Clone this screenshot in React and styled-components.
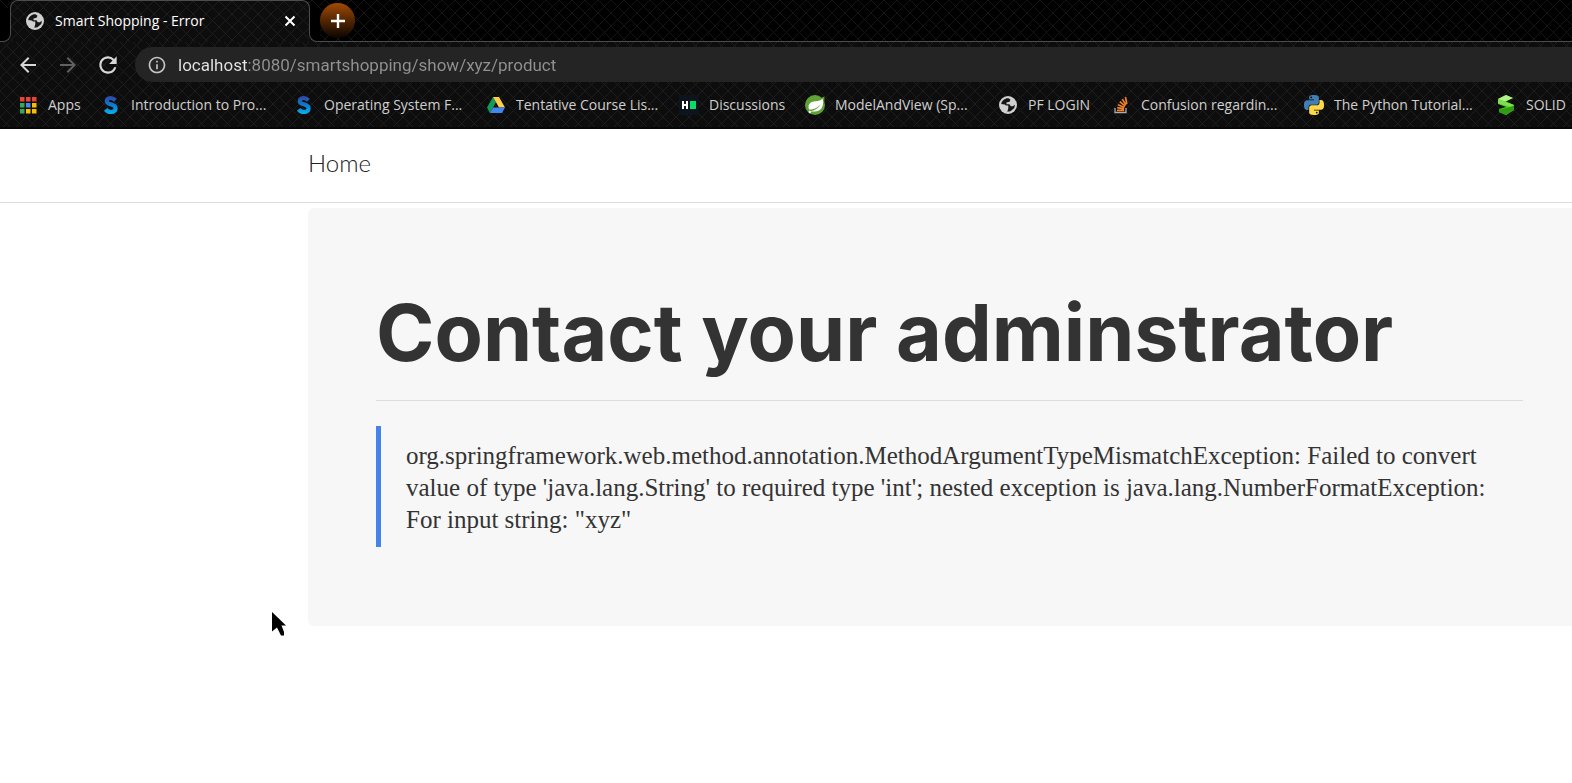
import React from 'react';
import styled, { createGlobalStyle, css } from 'styled-components';
import { MdInfoOutline, MdArrowBack, MdArrowForward, MdRefresh } from 'react-icons/md';

const GlobalStyle = createGlobalStyle`
  *, *::before, *::after { box-sizing: border-box; }
  html, body, #root { height: 100%; }
  body {
    margin: 0;
    overflow: hidden;
    background: #fff;
    font-family: "Open Sans", "Noto Sans", sans-serif;
  }
`;

const mesh = (line, base) => css`
  background-color: ${base};
  background-image:
    linear-gradient(45deg, transparent 47%, ${line} 47%, ${line} 53%, transparent 53%),
    linear-gradient(-45deg, transparent 47%, ${line} 47%, ${line} 53%, transparent 53%);
  background-size: 13px 13px;
`;

const Window = styled.div`
  position: relative;
  display: flex;
  flex-direction: column;
  min-height: 100%;
  overflow: hidden;
`;

const Chrome = styled.header`
  ${mesh('#1d1d1d', '#0d0d0d')}
  border-bottom: 2px solid #070707;
`;

const TabStrip = styled.div`
  ${mesh('#151515', '#000')}
  display: flex;
  align-items: flex-end;
  height: 42px;
`;

const Flare = styled.div`
  position: relative;
  z-index: 1;
  flex: none;
  width: 11px;
  height: 34px;
  background: #0d0d0d;

  &::before {
    content: "";
    display: block;
    height: 100%;
    background: #000;
    border: 0 solid #4c4c4c;
    border-bottom-width: 1px;
    ${p => p.$side === 'left'
      ? 'border-right-width: 1px; border-bottom-right-radius: 8px;'
      : 'border-left-width: 1px; border-bottom-left-radius: 8px;'}
  }
`;

const Tab = styled.div`
  ${mesh('#1d1d1d', '#0d0d0d')}
  display: flex;
  align-items: center;
  flex: none;
  gap: 10px;
  width: 300px;
  height: 42px;
  margin: 0 -1px;
  padding: 0 8px 2px 14px;
  border: 1px solid #4c4c4c;
  border-bottom: 0;
  border-radius: 8px 8px 0 0;
  color: #fff;
  font-size: 14px;
  line-height: 20px;
`;

const TabTitle = styled.span`
  flex: 1;
  white-space: nowrap;
`;

const IconButton = styled.button`
  display: flex;
  align-items: center;
  justify-content: center;
  flex: none;
  width: ${p => p.$size}px;
  height: ${p => p.$size}px;
  padding: 0;
  border: 0;
  border-radius: 50%;
  background: none;
  color: ${p => p.$color};
`;

const NewTabArea = styled.div`
  display: flex;
  flex: 1;
  align-items: center;
  height: 42px;
  border-bottom: 1px solid #4c4c4c;
`;

const NewTabButton = styled(IconButton)`
  background: linear-gradient(#a34a03, #5a2902 45%, #0c0500);
`;

const Toolbar = styled.div`
  display: flex;
  align-items: center;
  height: 45px;
  padding-left: 8px;
`;

const AddressBar = styled.label`
  display: flex;
  align-items: center;
  flex: 1;
  gap: 11px;
  height: 35px;
  margin-left: 7px;
  padding-left: 12px;
  border-radius: 18px 0 0 18px;
  background: #242424;
  color: #c4c4c4;
`;

const AddressInput = styled.input`
  flex: 1;
  min-width: 0;
  height: 26px;
  padding: 0;
  border: 0;
  outline: 0;
  background: linear-gradient(to right, #e6e6e6 69px, #929292 69px);
  background-clip: text;
  -webkit-background-clip: text;
  color: transparent;
  font: 17px/26px Roboto, sans-serif;
`;

const Bookmarks = styled.nav`
  display: flex;
  height: 40px;
  padding: 0 0 4px 18px;
`;

const Bookmark = styled.a`
  display: flex;
  align-items: center;
  flex: none;
  gap: 10px;
  width: ${p => p.$width}px;
  color: #cfcfcf;
  font-size: 14px;
  line-height: 20px;
  text-decoration: none;
  white-space: nowrap;
`;

const IconSlot = styled.span`
  display: flex;
  align-items: center;
  justify-content: center;
  flex: none;
  width: 20px;
  height: 20px;
`;

const SiteNav = styled.nav`
  padding: 20px 0 25px 308px;
  border-bottom: 1px solid #ddd;
  font: 300 24px/28px Lato, sans-serif;
`;

const SiteLink = styled.a`
  color: #222;
  text-decoration: none;
`;

const Card = styled.main`
  margin: 5px -19px 0 308px;
  padding: 68px;
  border-radius: 6px;
  background: #f7f7f7;
  color: #333;
`;

const Heading = styled.h1`
  margin: 0 0 25px;
  padding-bottom: 12px;
  border-bottom: 1px solid #ddd;
  font: 700 79px/112px Inter, sans-serif;
`;

const ErrorQuote = styled.blockquote`
  margin: 0 0 11px;
  padding: 14px 25px 11px;
  border-left: 5px solid #4582ec;
  font: 25px/32px "Liberation Serif", serif;
`;

const Pointer = styled.svg`
  position: absolute;
  top: 612px;
  left: 271px;
`;

const GlobeIcon = () => (
  <svg width="20" height="20" viewBox="0 0 20 20" aria-hidden="true">
    <circle cx="10" cy="10" r="9" fill="#d0d0d0" />
    <path
      d="M10.500 3.200C6.800 3 3.800 5.500 3.200 9L6.800 10.500H10.300V13.200L9.300 16.800L12.500 16.300L16.300 13L16.900 9.800L14.800 11.200H12.800L11.500 9.300H8.500V7.500L11.500 6.800L12.500 4.800Z"
      fill="#151515"
    />
    <path d="M3 9.300L7 9.600L8.500 12V13.500L6.500 13L3.200 10.500Z" fill="#d0d0d0" />
  </svg>
);

const CloseIcon = () => (
  <svg width="12" height="12" viewBox="0 0 12 12" aria-hidden="true">
    <path d="M1.500 1.500L10.500 10.500M10.500 1.500L1.500 10.500" stroke="currentColor" strokeWidth="2" />
  </svg>
);

const PlusIcon = () => (
  <svg width="16" height="16" viewBox="0 0 16 16" aria-hidden="true">
    <path d="M8 1V15M1 8H15" stroke="currentColor" strokeWidth="2.400" />
  </svg>
);

const AppsIcon = () => {
  const colors = ['#ea4335', '#ea4335', '#ea4335', '#34a853', '#4285f4', '#fbbc04', '#34a853', '#fbbc04', '#fbbc04'];
  return (
    <svg width="18" height="18" viewBox="0 0 18 18" aria-hidden="true">
      {colors.map((c, i) => (
        <rect key={i} x={1 + (i % 3) * 6} y={1 + Math.floor(i / 3) * 6} width="4.500" height="4.500" fill={c} />
      ))}
    </svg>
  );
};

const SwirlIcon = ({ id }) => (
  <svg width="20" height="20" viewBox="0 0 20 20" aria-hidden="true">
    <defs>
      <linearGradient id={id} gradientUnits="userSpaceOnUse" x1="10" y1="1" x2="10" y2="19">
        <stop offset="0" stopColor="#35439f" />
        <stop offset=".5" stopColor="#0b7bd0" />
        <stop offset="1" stopColor="#06b4f0" />
      </linearGradient>
    </defs>
    <path
      d="M14.4 5.2C12.6 3.4 10.9 2.9 9.3 3C7 3.2 5.7 4.6 5.8 6.3C6 9.9 14.4 8.7 14.6 13C14.7 15.4 12.8 17 10 17C7.800 17 6 16.200 4.600 14.400"
      fill="none"
      stroke={`url(#${id})`}
      strokeWidth="4.2"
    />
  </svg>
);

const DriveIcon = () => (
  <svg width="20" height="18" viewBox="0 0 20 18" aria-hidden="true">
    <path d="M7 1L10 6.300L4 17L1 11.600Z" fill="#0f9d58" />
    <path d="M7 1H13L19 11.600H13Z" fill="#ffcf48" />
    <path d="M7 11.600H19L16 17H4Z" fill="#4285f4" />
  </svg>
);

const HackerIcon = () => (
  <svg width="20" height="20" viewBox="0 0 20 20" aria-hidden="true">
    <rect width="20" height="20" fill="#0e141e" />
    <path d="M3 6H5V9H7V6H9V14H7V11H5V14H3Z" fill="#fff" />
    <rect x="11" y="6" width="6" height="8" fill="#05e06a" />
  </svg>
);

const SpringIcon = () => (
  <svg width="20" height="20" viewBox="0 0 20 20" aria-hidden="true">
    <circle cx="10" cy="10" r="10" fill="#5fa134" />
    <path d="M16.800 2.500L19.400 1.500L19.400 7Z" fill="#5fa134" />
    <path d="M17.600 3.400C19.200 8.600 17.500 15.300 11.600 16.200C8.900 16.700 6.500 16.500 4.800 16.200C10 15.700 13.800 12.600 15.600 9.200C12.700 12.700 9 14.300 4.500 14.800C2.700 12.300 3.500 8.700 6.700 7.100C10.500 5.300 14.800 6.900 17.600 3.400Z" fill="#fff" />
    <circle cx="4.800" cy="17" r="1.200" fill="#fff" />
  </svg>
);

const StackIcon = () => (
  <svg width="16" height="18" viewBox="0 0 16 18" aria-hidden="true">
    <path d="M2 12V16.500H13V12" fill="none" stroke="#a9adb0" strokeWidth="1.300" />
    <path
      d="M4 14.300H11M4.200 11.700L11.100 12.900M5 8.800L11.500 11.500M6.800 5.700L12.200 10.100M9.300 3.100L13 9M12.500 1.200L13.800 8"
      stroke="#f48024"
      strokeWidth="1.700"
      fill="none"
    />
  </svg>
);

const SNAKE =
  'M14.25.18l.9.2.73.26.59.3.45.32.34.34.25.34.16.33.1.3.04.26.02.2-.01.13V8.5l-.05.63-.13.55-.21.46-.26.38-.3.31-.33.25-.35.19-.35.14-.33.1-.3.07-.26.04-.21.02H8.77l-.69.05-.59.14-.5.22-.41.27-.33.32-.27.35-.2.36-.15.37-.1.35-.07.32-.04.27-.02.21v3.06H3.17l-.21-.03-.28-.07-.32-.12-.35-.18-.36-.26-.36-.36-.35-.46-.32-.59-.28-.73-.21-.88-.14-1.05-.05-1.23.06-1.22.16-1.04.24-.87.32-.71.36-.57.4-.44.42-.33.42-.24.4-.16.36-.1.32-.05.24-.01h.16l.06.01h8.16v-.83H6.18l-.01-2.75-.02-.37.05-.34.11-.31.17-.28.25-.26.31-.23.38-.2.44-.18.51-.15.58-.12.64-.1.71-.06.77-.04.84-.02 1.27.05zm-6.3 1.98l-.23.33-.08.41.08.41.23.34.33.22.41.09.41-.09.33-.22.23-.34.08-.41-.08-.41-.23-.33-.33-.22-.41-.09-.41.09z';

const PythonIcon = () => (
  <svg width="20" height="20" viewBox="0 0 24 24" aria-hidden="true">
    <path d={SNAKE} fill="#3f7fb5" />
    <path d={SNAKE} fill="#ffd845" transform="rotate(180 12 12)" />
  </svg>
);

const RibbonIcon = () => (
  <svg width="20" height="20" viewBox="0 0 20 20" aria-hidden="true">
    <path d="M2 4L10 0L17 3L10 6.500L18 10V15L10 20L3 17V14L10 12L2 9Z" fill="#4bc41e" />
    <path d="M2 4L10 0L17 3L9 6.500Z" fill="#b4f08c" />
    <path d="M2 4L18 10V13L2 8.500Z" fill="#7fe04e" />
    <path d="M3 14.500L11 13L18 10.500V15L10 20L3 17Z" fill="#2f9d10" />
  </svg>
);

const BOOKMARKS = [
  { label: 'Apps', width: 83, icon: <AppsIcon /> },
  { label: 'Introduction to Pro...', width: 193, icon: <SwirlIcon id="swirl-intro" /> },
  { label: 'Operating System F...', width: 192, icon: <SwirlIcon id="swirl-os" /> },
  { label: 'Tentative Course Lis...', width: 193, icon: <DriveIcon /> },
  { label: 'Discussions', width: 126, icon: <HackerIcon /> },
  { label: 'ModelAndView (Sp...', width: 193, icon: <SpringIcon /> },
  { label: 'PF LOGIN', width: 113, icon: <GlobeIcon /> },
  { label: 'Confusion regardin...', width: 193, icon: <StackIcon /> },
  { label: 'The Python Tutorial...', width: 192, icon: <PythonIcon /> },
  { label: 'SOLID', width: 193, icon: <RibbonIcon /> },
];

export default function App() {
  return (
    <Window>
      <GlobalStyle />
      <Chrome>
        <TabStrip>
          <Flare $side="left" />
          <Tab>
            <IconSlot><GlobeIcon /></IconSlot>
            <TabTitle>Smart Shopping - Error</TabTitle>
            <IconButton $size={22} $color="#fff" aria-label="Close tab"><CloseIcon /></IconButton>
          </Tab>
          <Flare $side="right" />
          <NewTabArea>
            <NewTabButton $size={35} $color="#fff" aria-label="New tab"><PlusIcon /></NewTabButton>
          </NewTabArea>
        </TabStrip>
        <Toolbar>
          <IconButton $size={40} $color="#d8d8d8" aria-label="Back"><MdArrowBack size={24} /></IconButton>
          <IconButton $size={40} $color="#616161" aria-label="Forward"><MdArrowForward size={24} /></IconButton>
          <IconButton $size={40} $color="#d8d8d8" aria-label="Reload"><MdRefresh size={26} /></IconButton>
          <AddressBar>
            <MdInfoOutline size={20} />
            <AddressInput aria-label="Address" defaultValue="localhost:8080/smartshopping/show/xyz/product" spellCheck="false" />
          </AddressBar>
        </Toolbar>
        <Bookmarks>
          {BOOKMARKS.map(b => (
            <Bookmark key={b.label} href="#" $width={b.width}>
              <IconSlot>{b.icon}</IconSlot>
              {b.label}
            </Bookmark>
          ))}
        </Bookmarks>
      </Chrome>
      <SiteNav>
        <SiteLink href="#">Home</SiteLink>
      </SiteNav>
      <Card>
        <Heading>Contact your adminstrator</Heading>
        <ErrorQuote>
          org.springframework.web.method.annotation.MethodArgumentTypeMismatchException: Failed to convert
          value of type 'java.lang.String' to required type 'int'; nested exception is
          java.lang.NumberFormatException: For input string: "xyz"
        </ErrorQuote>
      </Card>
      <Pointer width="16" height="25" viewBox="0 0 16 25" aria-hidden="true">
        <path d="M1 0L15 13.500H10.500L13 20V23.500H10L6 15.500L1 19.500Z" fill="#000" />
      </Pointer>
    </Window>
  );
}
